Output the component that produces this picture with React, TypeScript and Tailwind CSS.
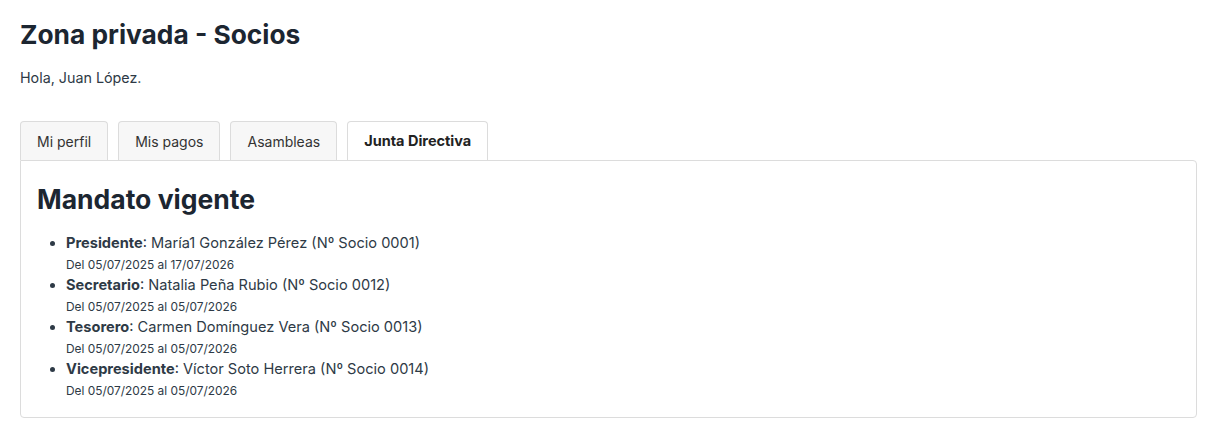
import React from "react";

const members = [
  { role: "Presidente", name: "María1 González Pérez (Nº Socio 0001)", dates: "Del 05/07/2025 al 17/07/2026" },
  { role: "Secretario", name: "Natalia Peña Rubio (Nº Socio 0012)", dates: "Del 05/07/2025 al 05/07/2026" },
  { role: "Tesorero", name: "Carmen Domínguez Vera (Nº Socio 0013)", dates: "Del 05/07/2025 al 05/07/2026" },
  { role: "Vicepresidente", name: "Víctor Soto Herrera (Nº Socio 0014)", dates: "Del 05/07/2025 al 05/07/2026" },
];

const tabs = ["Mi perfil", "Mis pagos", "Asambleas", "Junta Directiva"];

export default function App() {
  return (
    <div className="min-h-screen bg-white px-5 pt-[18px] text-[#1f2a35]" style={{ fontFamily: "Inter, 'Liberation Sans', sans-serif" }}>
      <h1 className="text-[26.3px] font-bold leading-[34px] text-[#1c2631]">Zona privada - Socios</h1>
      <p className="mt-[16px] text-[14.3px] leading-[20px] text-[#2e3a46]">Hola, Juan López.</p>
      <div className="mt-[33px] flex gap-[10px]">
        {tabs.map((t, i) => {
          const active = i === tabs.length - 1;
          return (
            <div
              key={t}
              className={
                active
                  ? "flex h-[39px] items-center rounded-t-[4px] border border-b-0 border-[#dcdcdc] bg-white px-4 text-[14.5px] font-bold text-[#222]"
                  : "flex h-[39px] items-center rounded-t-[4px] border border-b-0 border-[#dcdcdc] bg-[#f7f7f7] px-4 text-[14px] text-[#333]"
              }
            >
              {t}
            </div>
          );
        })}
      </div>
      <div className="w-[1177px] rounded-b-[4px] rounded-tr-[4px] border border-[#dcdcdc] px-4 pb-[16px] pt-[22px]">
        <h2 className="text-[26.5px] font-bold leading-[32px] text-[#1c2631]">Mandato vigente</h2>
        <ul className="mt-[18px] list-disc pl-[29px] text-[#2e3a46]">
          {members.map((m) => (
            <li key={m.role} className="text-[14.6px] leading-[21px]">
              <b className="font-bold">{m.role}</b>: {m.name}
              <div className="text-[11.9px] leading-[21px]">{m.dates}</div>
            </li>
          ))}
        </ul>
      </div>
    </div>
  );
}
